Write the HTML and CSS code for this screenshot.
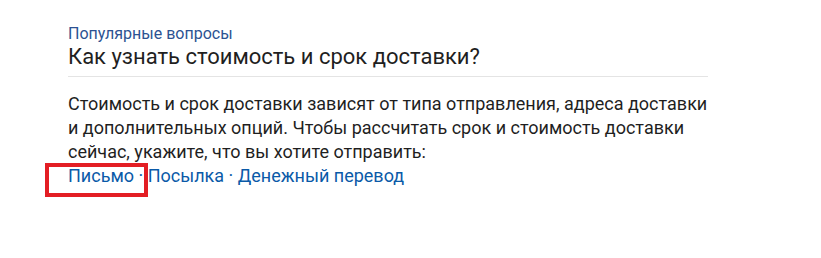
FILE: index.html
```html
<!DOCTYPE html>
<html lang="ru">
<head>
    <meta charset="UTF-8">
    <meta name="viewport" content="width=device-width, initial-scale=1.0">
    <title>Популярные вопросы</title>
    <link rel="stylesheet" href="styles.css">
</head>
<body>
<div class="faq">
    <div class="faq-label">Популярные вопросы</div>
    <h2 class="faq-title">Как узнать стоимость и срок доставки?</h2>
    <p class="faq-text">Стоимость и срок доставки зависят от типа отправления, адреса доставки и дополнительных опций. Чтобы рассчитать срок и стоимость доставки сейчас, укажите, что вы хотите отправить:</p>
    <div class="faq-links">
        <span class="highlight-box"></span>
        <a href="#">Письмо</a> · <a href="#">Посылка</a> · <a href="#">Денежный перевод</a>
    </div>
</div>
</body>
</html>
```

FILE: styles.css
```css
body {
    font-family: Roboto, 'Liberation Sans', sans-serif;
    background-color: #ffffff;
    margin: 0;
    padding: 0;
    min-height: 258px;
}
.faq {
    width: 640px;
    margin-left: 68px;
    padding-top: 24px;
    padding-bottom: 60px;
    color: #1f1f1f;
}
.faq-label {
    font-size: 16px;
    line-height: 19px;
    color: #2c5292;
}
.faq-title {
    margin: 0;
    font-size: 22px;
    font-weight: normal;
    line-height: 28px;
    padding-bottom: 5px;
    border-bottom: 1px solid #e4e4e4;
}
.faq-text {
    margin: 15px 0 0;
    font-size: 18px;
    line-height: 24px;
}
.faq-links {
    position: relative;
    font-size: 18px;
    line-height: 24px;
    color: #0a5aa8;
}
.faq-links a {
    color: #0a5aa8;
    text-decoration: none;
}
.highlight-box {
    position: absolute;
    left: -23px;
    top: -1px;
    width: 95px;
    height: 26px;
    border: 4px solid #e31e24;
}
```
